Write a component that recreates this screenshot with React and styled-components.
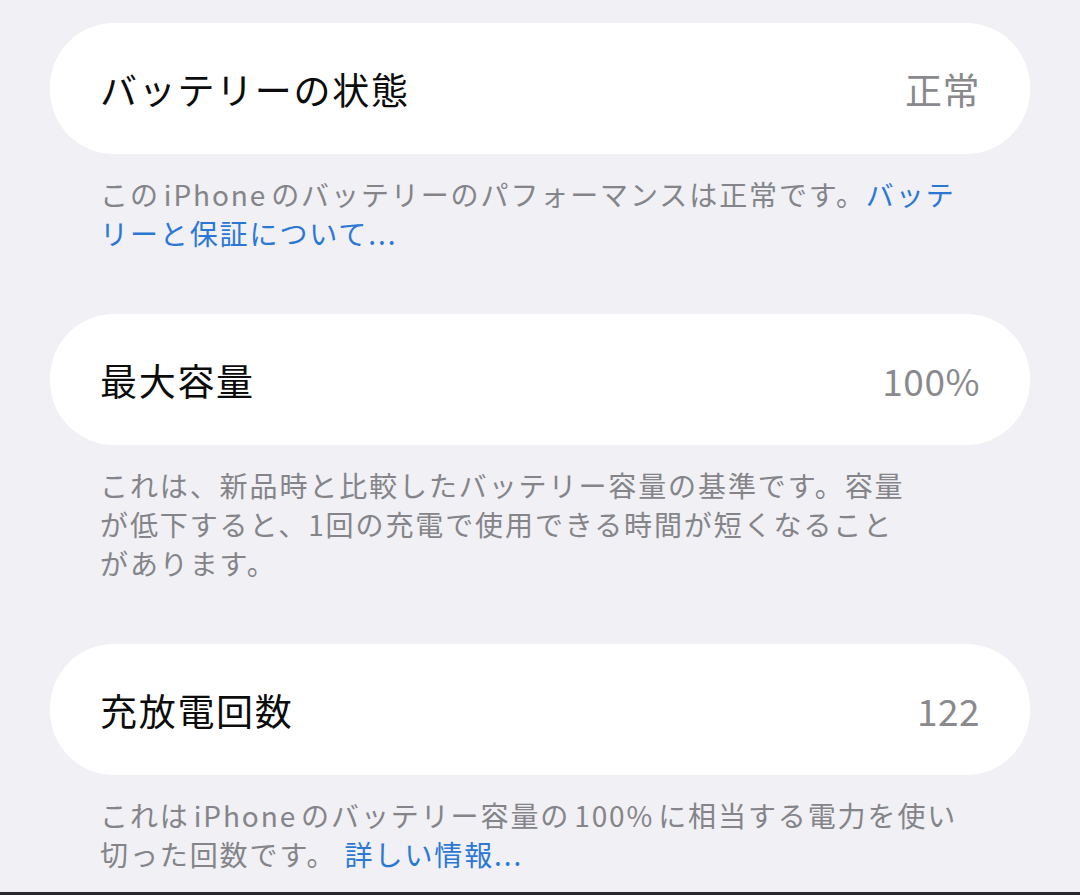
import React from 'react';
import styled, { createGlobalStyle } from 'styled-components';

const GlobalStyle = createGlobalStyle`
  html, body {
    margin: 0;
    padding: 0;
    background: #f0f0f5;
  }
  body {
    font-family: "Noto Sans CJK JP", "Noto Sans", sans-serif;
    -webkit-font-smoothing: antialiased;
  }
`;

const Page = styled.div`
  height: 895px;
  box-sizing: border-box;
  padding: 23px 50px 0;
  display: flex;
  flex-direction: column;
  gap: 61px;
  position: relative;
  overflow: hidden;
`;

const Section = styled.section`
  display: flex;
  flex-direction: column;
`;

const Card = styled.div`
  height: 131px;
  background: #ffffff;
  border-radius: 64px;
  padding: 0 50px;
  display: flex;
  align-items: center;
  justify-content: space-between;
`;

const Title = styled.span`
  font-size: 37px;
  color: #0c0c0c;
  letter-spacing: 1.7px;
`;

const Value = styled.span`
  font-size: 37px;
  color: #8a8a8e;
  letter-spacing: 0.5px;
`;

const Note = styled.div`
  padding: 21px 50px 0;
  font-size: 28px;
  line-height: 39px;
  color: #848489;
  letter-spacing: 1.9px;
`;

const Line = styled.div`
  white-space: nowrap;
`;

/* latin words inside Japanese text get a little air on both sides */
const Latin = styled.span`
  margin: 0 4px;
`;

const Link = styled.span`
  color: #2b78d4;
`;

const Edge = styled.div`
  position: absolute;
  left: 0;
  right: 0;
  bottom: 0;
  height: 3px;
  background: #2a2a2e;
`;

const sections = [
  {
    title: 'バッテリーの状態',
    value: '正常',
    note: [
      <>この<Latin>iPhone</Latin>のバッテリーのパフォーマンスは正常です。<Link>バッテ</Link></>,
      <Link>リーと保証について...</Link>,
    ],
  },
  {
    title: '最大容量',
    value: '100%',
    note: [
      'これは、新品時と比較したバッテリー容量の基準です。容量',
      'が低下すると、1回の充電で使用できる時間が短くなること',
      'があります。',
    ],
  },
  {
    title: '充放電回数',
    value: '122',
    note: [
      <>これは<Latin>iPhone</Latin>のバッテリー容量の<Latin>100%</Latin>に相当する電力を使い</>,
      <>切った回数です。 <Link>詳しい情報...</Link></>,
    ],
  },
];

export default function App() {
  return (
    <>
      <GlobalStyle />
      <Page>
        {sections.map((s) => (
          <Section key={s.title}>
            <Card>
              <Title>{s.title}</Title>
              <Value>{s.value}</Value>
            </Card>
            <Note>
              {s.note.map((line, i) => (
                <Line key={i}>{line}</Line>
              ))}
            </Note>
          </Section>
        ))}
        <Edge />
      </Page>
    </>
  );
}
